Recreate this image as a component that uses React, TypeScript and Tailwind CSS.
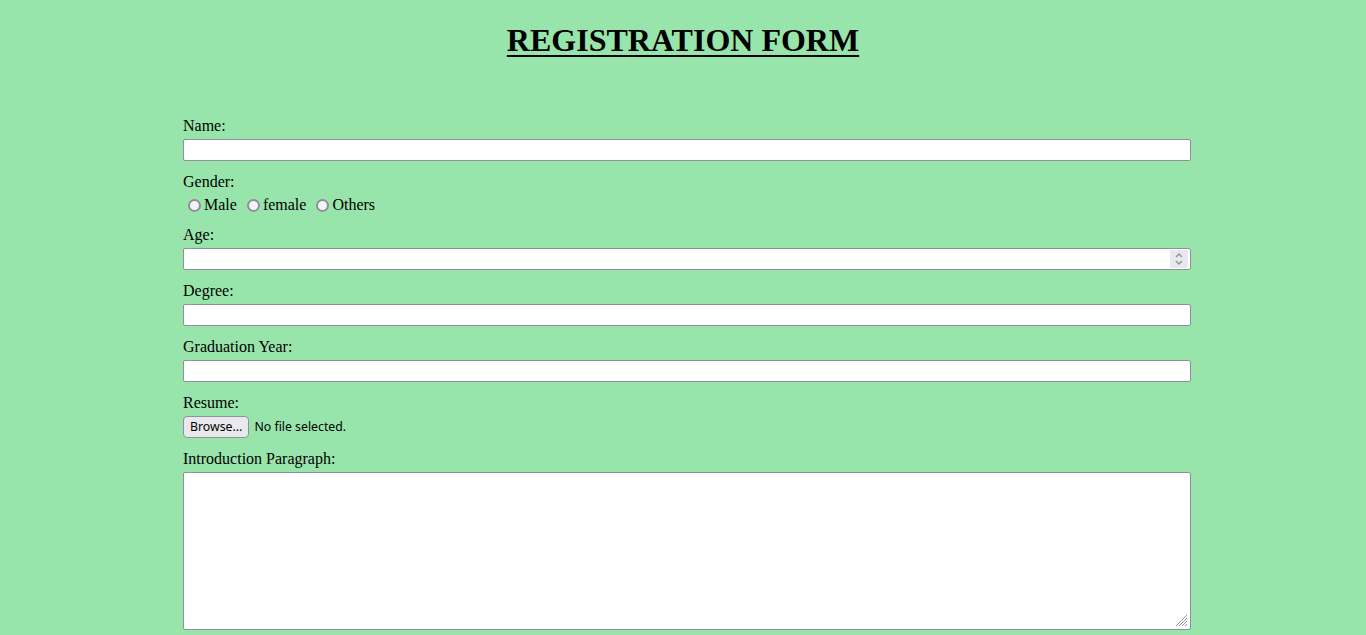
import React from "react";

const fields = ["Age", "Degree", "Graduation Year"];

const Radio = ({ label }: { label: string }) => (
  <span className="flex items-center">
    <span className="ml-[5px] mr-[3px] mt-[1px] w-[13px] h-[13px] rounded-full border-2 border-[#8f8f9d] bg-[#f4f4f6]" />
    <span>{label}</span>
  </span>
);

const Spinner = () => (
  <span className="absolute right-[3px] top-[2px] w-[18px] h-[18px] bg-[#e9e9ed] flex items-center justify-center">
    <svg width="10" height="14" viewBox="0 0 10 14" fill="none" stroke="#8f8f9d" strokeWidth="1.4">
      <path d="M2 5 L5 2 L8 5" />
      <path d="M2 9 L5 12 L8 9" />
    </svg>
  </span>
);

export default function App() {
  return (
    <div className="min-h-screen bg-[#98e5ac] text-black font-['Liberation_Serif',serif] text-[16px] leading-[18px]">
      <h1 className="pt-[22px] text-center text-[32px] leading-[37px] font-bold underline decoration-2 underline-offset-[4px]">
        REGISTRATION FORM
      </h1>

      <form className="ml-[183px] w-[1008px] mt-[58px] flex flex-col gap-[12px] pb-10">
        <div className="flex flex-col gap-[4px]">
          <label>Name:</label>
          <input type="text" className="h-[22px] w-full bg-white border border-[#8f8f9d] rounded-[2px] outline-none" />
        </div>

        <div className="flex flex-col gap-[4px]">
          <label>Gender:</label>
          <div className="flex items-center h-[19px] gap-[5px]">
            <Radio label="Male" />
            <Radio label="female" />
            <Radio label="Others" />
          </div>
        </div>

        {fields.map((f) => (
          <div key={f} className="flex flex-col gap-[4px]">
            <label>{f}:</label>
            <div className="relative h-[22px]">
              <input type="text" className="h-[22px] w-full bg-white border border-[#8f8f9d] rounded-[2px] outline-none" />
              {f === "Age" && <Spinner />}
            </div>
          </div>
        ))}

        <div className="flex flex-col gap-[4px]">
          <label>Resume:</label>
          <div className="flex items-center gap-[5px] font-['Noto_Sans',sans-serif] text-[12.3px]">
            <button type="button" className="h-[22px] px-[6px] bg-[#e9e9ed] border border-[#8f8f9d] rounded-[4px] leading-[18px]">
              Browse...
            </button>
            <span>No file selected.</span>
          </div>
        </div>

        <div className="flex flex-col gap-[4px]">
          <label>Introduction Paragraph:</label>
          <div className="relative h-[158px]">
            <textarea className="h-[158px] w-full bg-white border border-[#8f8f9d] rounded-[2px] resize-none outline-none block" />
            <svg className="absolute right-[3px] bottom-[3px]" width="13" height="13" viewBox="0 0 13 13" stroke="#8f8f9d" strokeWidth="1">
              <path d="M12 1 L1 12" />
              <path d="M12 4 L4 12" />
              <path d="M12 7 L7 12" />
              <path d="M12 10 L10 12" />
            </svg>
          </div>
        </div>
      </form>
    </div>
  );
}
